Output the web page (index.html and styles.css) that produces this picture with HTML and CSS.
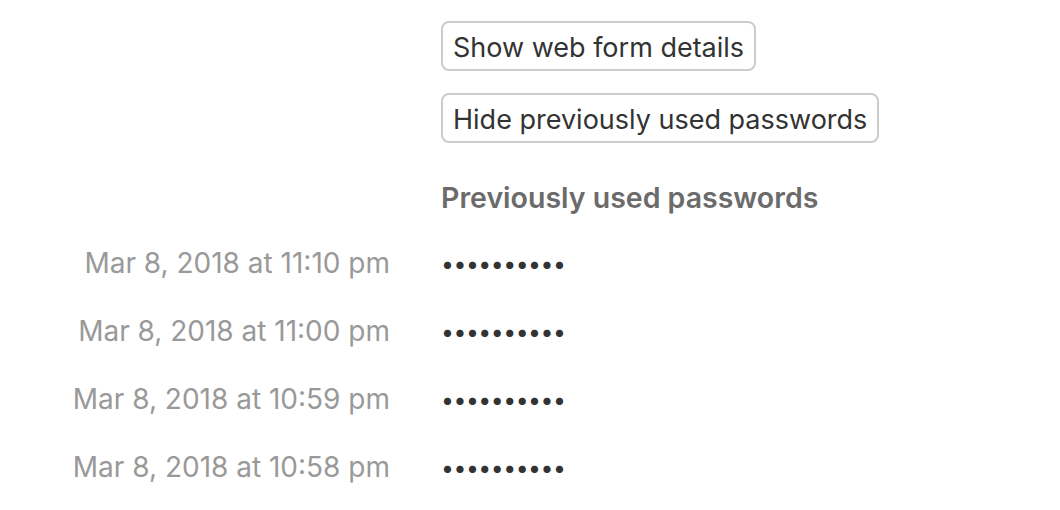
FILE: index.html
```html
<!DOCTYPE html>
<html lang="en" dir="ltr">
  <head>
    <meta charset="utf-8">
    <link rel="stylesheet" href="styles.css">
    <title>Password history</title>
  </head>
  <body>
    <div class="details">
      <div class="label"></div>
      <div class="value">
        <button class="btn" type="button">Show web form details</button>
      </div>
      <div class="label"></div>
      <div class="value">
        <button class="btn" type="button">Hide previously used passwords</button>
      </div>
      <div class="label"></div>
      <div class="value heading">Previously used passwords</div>
      <div class="label row">Mar 8, 2018 at 11:10 pm</div>
      <div class="value row dots">••••••••••</div>
      <div class="label row">Mar 8, 2018 at 11:00 pm</div>
      <div class="value row dots">••••••••••</div>
      <div class="label row">Mar 8, 2018 at 10:59 pm</div>
      <div class="value row dots">••••••••••</div>
      <div class="label row">Mar 8, 2018 at 10:58 pm</div>
      <div class="value row dots">••••••••••</div>
    </div>
  </body>
</html>
```
FILE: styles.css
```css
body {
  margin: 0;
  background: #fff;
  font-family: "Inter", "Liberation Sans", sans-serif;
  color: #333;
}
.details {
  display: grid;
  grid-template-columns: 390px 1fr;
  column-gap: 51px;
  padding-top: 21px;
}
.label {
  text-align: right;
  color: #999;
  font-size: 28px;
}
.value {
  font-size: 28px;
  margin-bottom: 22px;
}
.btn {
  font-family: inherit;
  font-size: 27px;
  color: #333;
  background: #fff;
  border: 2px solid #ccc;
  border-radius: 8px;
  height: 50px;
  padding: 2px 10px 0;
}
.heading {
  font-weight: 600;
  font-size: 28.5px;
  color: #6b6b6b;
  margin-top: 15px;
  margin-bottom: 14px;
}
.row {
  height: 68px;
  line-height: 68px;
  margin: 0;
}
.dots {
  color: #333;
  font-size: 23px;
  letter-spacing: -0.5px;
  padding-top: 1px;
  box-sizing: border-box;
}
```
